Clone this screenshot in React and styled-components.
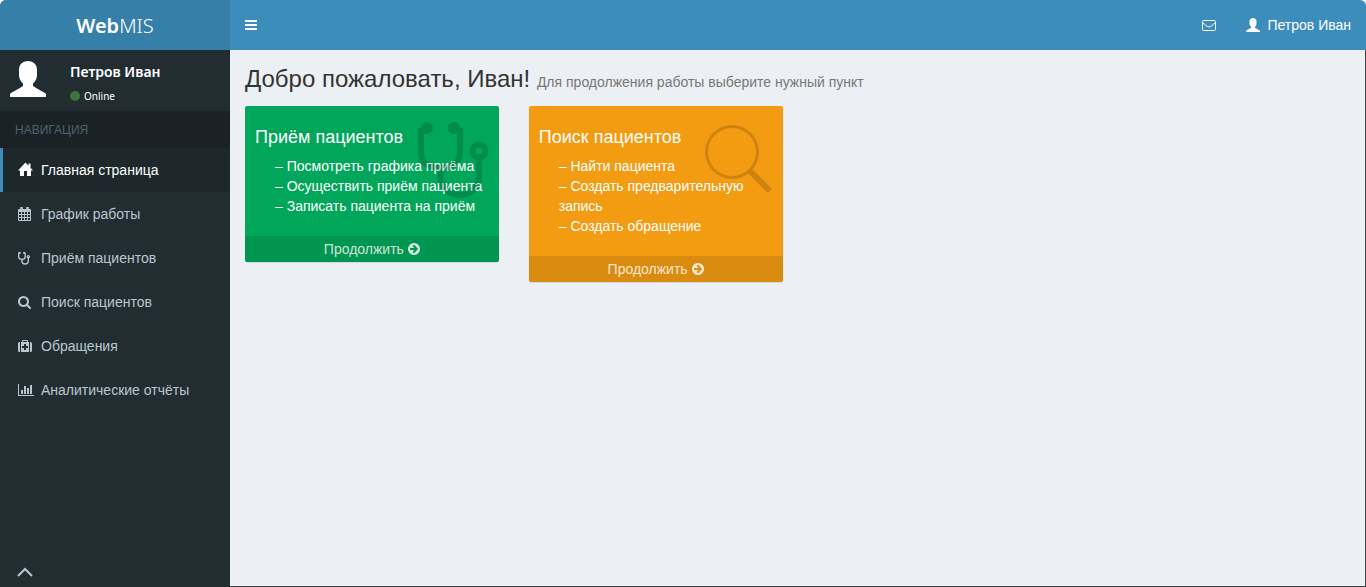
import React from "react";
import styled, { createGlobalStyle } from "styled-components";

const GlobalStyle = createGlobalStyle`
  * { box-sizing: border-box; }
  body {
    margin: 0;
    background: #fff;
    font-family: "Liberation Sans", Arial, sans-serif;
    font-size: 14px;
    line-height: 20px;
    color: #333;
  }
  a { color: inherit; text-decoration: none; }
  ul { list-style: none; margin: 0; padding: 0; }
  button { font: inherit; color: inherit; background: none; border: 0; padding: 0; cursor: pointer; }
  svg { display: block; flex: none; }
`;

const Page = styled.div`
  display: flex;
  flex-direction: column;
  min-height: 100vh;
`;

const Header = styled.header`
  display: flex;
  height: 50px;
  border-radius: 6px 6px 0 0;
  overflow: hidden;
  background: #3c8dbc;
  color: #fff;
`;

const Logo = styled.a`
  width: 230px;
  background: #367fa9;
  font-family: "Noto Sans", sans-serif;
  font-weight: 300;
  font-size: 20px;
  line-height: 52px;
  text-align: center;
  b { font-weight: 600; }
`;

const Navbar = styled.div`
  flex: 1;
  display: flex;
  align-items: stretch;
  justify-content: space-between;
`;

const NavButton = styled.button`
  display: flex;
  align-items: center;
  gap: 7px;
  padding: 0 15px;
`;

const NavGroup = styled.div`
  display: flex;
`;

const Body = styled.div`
  flex: 1;
  display: flex;
  border-right: 1px solid #414245;
`;

const Sidebar = styled.aside`
  width: 230px;
  display: flex;
  flex-direction: column;
  background: #222d32;
  color: #b8c7ce;
`;

const UserPanel = styled.div`
  display: flex;
  gap: 24px;
  height: 61px;
  padding: 11px 10px;
  color: #fff;
`;

const UserInfo = styled.div`
  display: flex;
  flex-direction: column;
  gap: 5px;
  font-family: "Noto Sans", sans-serif;
`;

const UserName = styled.div`
  font-size: 14px;
  line-height: 22px;
  font-weight: 600;
`;

const Status = styled.a`
  display: flex;
  align-items: center;
  gap: 4px;
  font-size: 10px;
  line-height: 16px;
  &::before {
    content: "";
    width: 10px;
    height: 10px;
    border-radius: 50%;
    background: #3c763d;
  }
`;

const NavTitle = styled.div`
  padding: 9px 15px;
  height: 37px;
  font-size: 12px;
  line-height: 20px;
  background: #1a2226;
  color: #4b646f;
`;

const MenuLink = styled.a`
  display: flex;
  align-items: center;
  gap: 7px;
  height: 44px;
  padding-left: 15px;
  border-left: 3px solid ${(p) => (p.$active ? "#3c8dbc" : "transparent")};
  background: ${(p) => (p.$active ? "#1e282c" : "transparent")};
  color: ${(p) => (p.$active ? "#fff" : "inherit")};
`;

const UpButton = styled.button`
  align-self: flex-start;
  margin-top: auto;
  padding: 10px 17px;
`;

const Content = styled.main`
  flex: 1;
  padding: 15px;
  background: #ecf0f5;
  border-bottom: 1px solid #414245;
`;

const Title = styled.h1`
  margin: 0 0 13px;
  font-size: 24px;
  line-height: 28px;
  font-weight: 400;
  small {
    font-size: 14px;
    line-height: 1;
    color: #777;
  }
`;

const Cards = styled.div`
  display: grid;
  grid-template-columns: repeat(4, 1fr);
  gap: 30px;
  align-items: start;
`;

const Card = styled.section`
  position: relative;
  border-radius: 2px;
  background: ${(p) => p.$color};
  color: #fff;
  box-shadow: 0 1px 1px rgba(0, 0, 0, 0.1);
`;

const CardInner = styled.div`
  padding: 20px 10px;
`;

const CardTitle = styled.h2`
  margin: 0 0 8px;
  font-size: 18px;
  line-height: 22px;
  font-weight: 400;
`;

const Points = styled.ul`
  && { padding: 0 0 0 20px; }
`;

const CardLink = styled.a`
  display: flex;
  align-items: center;
  justify-content: center;
  gap: 4px;
  height: 26px;
  background: rgba(0, 0, 0, 0.1);
  color: rgba(255, 255, 255, 0.8);
  border-radius: 0 0 2px 2px;
`;

const CardArt = styled.svg`
  position: absolute;
  top: 15px;
  right: 10px;
  opacity: 0.15;
  pointer-events: none;
`;

const Fa = ({ d, w = 12, x = 128 }) => (
  <svg width={w} height="14" viewBox={`${x} 0 ${w * 128} 1792`} fill="currentColor" aria-hidden="true">
    <path d={d} />
  </svg>
);

const Person = ({ size }) => (
  <svg width={size} height={size} viewBox="0 0 36 36" fill="currentColor" aria-hidden="true">
    <path d="M18 0C12.500 0 9 3.500 9 9V14C9 18 11 20.500 13 22.500V25C9 28 1.500 31 0 33V36H36V33C34.500 31 27 28 23 25V22.500C25 20.500 27 18 27 14V9C27 3.500 23.500 0 18 0Z" />
  </svg>
);

const HomeIcon = () => (
  <svg width="16" height="16" viewBox="0 0 16 16" fill="currentColor" aria-hidden="true">
    <path d="M7.500 0.500L0 8.500H2V14H6V9H9V14H13V8.500H15L12.500 5.800V1.500H10.500V3.700Z" />
  </svg>
);

const CalendarIcon = () => (
  <svg width="16" height="16" viewBox="0 0 16 16" fill="none" stroke="currentColor" aria-hidden="true">
    <path d="M0.500 3.500H12.500V14.500H0.500ZM0 5.500H13M0 8.500H13M0 11.500H13M3.500 5V15M6.500 5V15M9.500 5V15" />
    <path d="M0 4.500H13" />
    <path d="M3.500 1V4M9.500 1V4" strokeWidth="2.600" />
  </svg>
);

const StethoscopeShape = () => (
  <>
    <path d="M4 7V31Q4 47 23.500 47Q43 47 43 31V7" />
    <path d="M23.500 47V56A19.250 18 0 0 0 62 56V38" />
    <circle cx="62" cy="30" r="6.500" />
    <circle cx="10" cy="7" r="3" />
    <circle cx="37" cy="7" r="3" />
  </>
);

const StethoscopeIcon = () => (
  <svg width="16" height="16" viewBox="0 -10 96 96" fill="none" stroke="currentColor" strokeWidth="8" aria-hidden="true">
    <StethoscopeShape />
  </svg>
);

const MedkitIcon = () => (
  <svg width="16" height="16" viewBox="0 0 16 16" fill="currentColor" aria-hidden="true">
    <path d="M4.500 4V2.500H9.500V4" fill="none" stroke="currentColor" />
    <path d="M2 4H1.500Q0 4 0 5.500V12.500Q0 14 1.500 14H2ZM12 4H12.500Q14 4 14 5.500V12.500Q14 14 12.500 14H12Z" />
    <path fillRule="evenodd" d="M3 4H11V14H3ZM6 6V8H4V10H6V12H8V10H10V8H8V6Z" />
  </svg>
);

const EnvelopeIcon = () => (
  <svg width="14" height="14" viewBox="0 0 14 14" fill="none" stroke="currentColor" aria-hidden="true">
    <rect x="0.500" y="2.500" width="13" height="10" rx="1" />
    <path d="M0.500 4.500C3 6.500 5 9 7 9S11 6.500 13.500 4.500" />
  </svg>
);

const BARS =
  "M1664 1344v128q0 26-19 45t-45 19h-1408q-26 0-45-19t-19-45v-128q0-26 19-45t45-19h1408q26 0 45 19t19 45zm0-512v128q0 26-19 45t-45 19h-1408q-26 0-45-19t-19-45v-128q0-26 19-45t45-19h1408q26 0 45 19t19 45zm0-512v128q0 26-19 45t-45 19h-1408q-26 0-45-19t-19-45v-128q0-26 19-45t45-19h1408q26 0 45 19t19 45z";
const SEARCH =
  "M1216 832q0-185-131.500-316.500t-316.500-131.500-316.500 131.500-131.500 316.500 131.500 316.500 316.500 131.500 316.500-131.500 131.500-316.500zm512 832q0 52-38 90t-90 38q-54 0-90-38l-343-342q-179 124-399 124-143 0-273.500-55.500t-225-150-150-225-55.500-273.500 55.500-273.500 150-225 225-150 273.500-55.500 273.500 55.500 225 150 150 225 55.500 273.500q0 220-124 399l343 343q37 37 37 90z";
const ARROW =
  "M1413 896q0-27-18-45l-91-91-362-362q-18-18-45-18t-45 18l-91 91q-18 18-18 45t18 45l189 189h-502q-26 0-45 19t-19 45v128q0 26 19 45t45 19h502l-189 189q-18 18-18 45t18 45l91 91q18 18 45 18t45-18l362-362 91-91q18-18 18-45zm251 0q0 209-103 385.500t-279.500 279.500-385.500 103-385.500-103-279.500-279.500-103-385.500 103-385.500 279.500-279.500 385.500-103 385.500 103 279.500 279.500 103 385.500z";
const CHART =
  "M640 896v512h-256v-512h256zm384-512v1024h-256v-1024h256zm1024 1152v128h-2048v-1536h128v1408h1920zm-640-896v768h-256v-768h256zm384-384v1152h-256v-1152h256z";

const MENU = [
  { label: "Главная страница", icon: <HomeIcon />, active: true },
  { label: "График работы", icon: <CalendarIcon /> },
  { label: "Приём пациентов", icon: <StethoscopeIcon /> },
  { label: "Поиск пациентов", icon: <Fa d={SEARCH} w={16} x={64} /> },
  { label: "Обращения", icon: <MedkitIcon /> },
  { label: "Аналитические отчёты", icon: <Fa d={CHART} w={16} x={0} /> },
];

const CARDS = [
  {
    title: "Приём пациентов",
    color: "#00a65a",
    points: ["– Посмотреть графика приёма", "– Осуществить приём пациента", "– Записать пациента на приём"],
    art: (
      <CardArt width="72" height="80" viewBox="0 0 72 80" fill="none" stroke="#000" strokeWidth="6" aria-hidden="true">
        <StethoscopeShape />
      </CardArt>
    ),
  },
  {
    title: "Поиск пациентов",
    color: "#f39c12",
    points: ["– Найти пациента", "– Создать предварительную запись", "– Создать обращение"],
    art: (
      <CardArt width="72" height="80" viewBox="0 0 72 80" fill="none" stroke="#000" aria-hidden="true">
        <circle cx="31" cy="31" r="25.500" strokeWidth="3" />
        <path d="M49 50L69 70" strokeWidth="6" />
      </CardArt>
    ),
  },
];

export default function App() {
  return (
    <Page>
      <GlobalStyle />
      <Header>
        <Logo href="#">
          <b>Web</b>MIS
        </Logo>
        <Navbar>
          <NavButton aria-label="Меню">
            <Fa d={BARS} />
          </NavButton>
          <NavGroup>
            <NavButton aria-label="Сообщения">
              <EnvelopeIcon />
            </NavButton>
            <NavButton>
              <Person size={14} />
              Петров Иван
            </NavButton>
          </NavGroup>
        </Navbar>
      </Header>
      <Body>
        <Sidebar>
          <UserPanel>
            <Person size={36} />
            <UserInfo>
              <UserName>Петров Иван</UserName>
              <Status href="#">Online</Status>
            </UserInfo>
          </UserPanel>
          <NavTitle>НАВИГАЦИЯ</NavTitle>
          <nav>
            <ul>
              {MENU.map((m) => (
                <li key={m.label}>
                  <MenuLink href="#" $active={m.active}>
                    {m.icon}
                    {m.label}
                  </MenuLink>
                </li>
              ))}
            </ul>
          </nav>
          <UpButton aria-label="Наверх">
            <svg width="16" height="10" viewBox="0 0 16 10" fill="none" stroke="currentColor" strokeWidth="2" aria-hidden="true">
              <path d="M1 9L8 2L15 9" />
            </svg>
          </UpButton>
        </Sidebar>
        <Content>
          <Title>
            Добро пожаловать, Иван! <small>Для продолжения работы выберите нужный пункт</small>
          </Title>
          <Cards>
            {CARDS.map((c) => (
              <Card key={c.title} $color={c.color}>
                <CardInner>
                  <CardTitle>{c.title}</CardTitle>
                  <Points>
                    {c.points.map((p) => (
                      <li key={p}>{p}</li>
                    ))}
                  </Points>
                </CardInner>
                {c.art}
                <CardLink href="#">
                  Продолжить
                  <Fa d={ARROW} />
                </CardLink>
              </Card>
            ))}
          </Cards>
        </Content>
      </Body>
    </Page>
  );
}
